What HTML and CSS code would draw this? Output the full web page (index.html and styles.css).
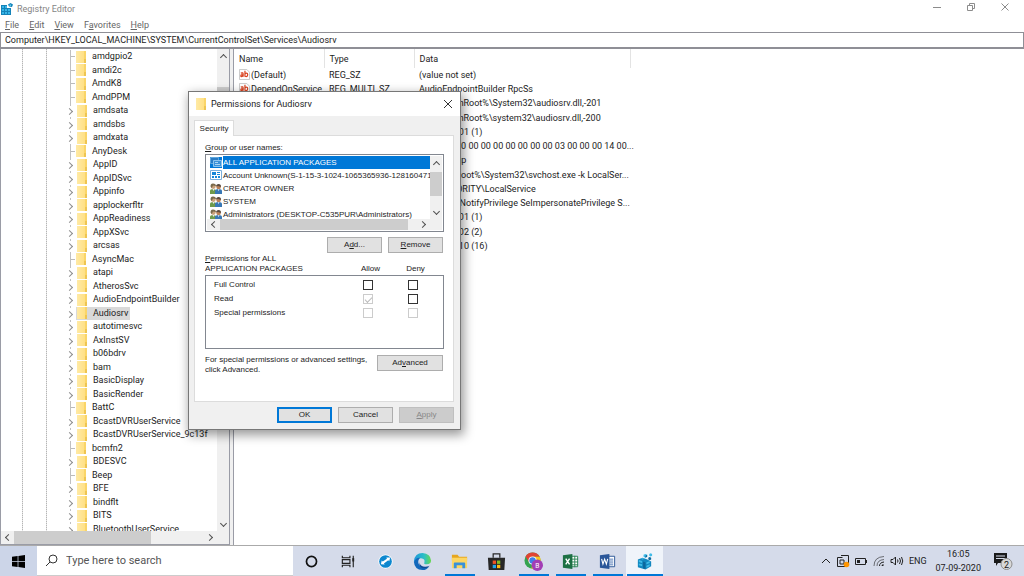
FILE: index.html
```html
<!DOCTYPE html>
<html lang="en">
<head>
<meta charset="utf-8">
<title>Registry Editor</title>
<link rel="stylesheet" href="styles.css">
</head>
<body>
<svg class="sprite" aria-hidden="true">
  <symbol id="i-reg" viewBox="0 0 12 12">
    <path fill="#1583b8" d="M0 2h6v3h4v7H0z"/>
    <path fill="#38b6e8" d="M1 3h2v2H1zM4 3h2v2H4zM1 6h2v2H1zM4 6h2v2H4zM7 6h2v2H7zM1 9h2v2H1zM4 9h2v2H4zM7 9h2v2H7z"/>
    <path fill="#1583b8" d="M9.500 0 12 1.500 11 4 8 3.500 7 1.500z"/>
    <path fill="#58caf2" d="M8.500 1.500h1.500V3H8.500z"/>
  </symbol>
  <symbol id="i-string" viewBox="0 0 12 12">
    <path fill="#fff" stroke="#c4c4c4" d="M.5.5h8l3 3v8H.5z"/>
    <path fill="none" stroke="#d9411e" stroke-width="1.300" d="M2 4.500q2.500-1 2.500 1v3M4.500 6.200Q2 6 2 7.500t2.500 0M6.500 2v6.500M6.500 6q0-1.500 1.500-1.500T9.500 6.400 8 8.300 6.500 7"/>
  </symbol>
  <symbol id="i-users" viewBox="0 0 12 11">
    <path fill="#6f9a4b" d="M0 11V8q0-2 3-2t3 2v3z"/>
    <path fill="#3978b5" d="M5 11V8q0-2 3.500-2T12 8v3z"/>
    <circle cx="3.300" cy="3.500" r="2.400" fill="#caa27a"/>
    <path fill="#7a6a4c" d="M.7 4Q0 .5 3 .5q3 0 3 2.500L3 2.500 1.800 5z"/>
    <circle cx="8.600" cy="4" r="2.300" fill="#b98057"/>
    <path fill="#5a4a3e" d="M6 3.500Q6 1 8.600 1T11 4L8 3z"/>
    <path fill="#e7edf1" d="m2.500 6 1 2 1-2zM7.800 6.300l.8 2 .8-2z"/>
  </symbol>
  <symbol id="i-packages" viewBox="0 0 12 11">
    <path fill="#2b7cc4" stroke="#5fa8de" d="M.5.5h8v6h-8z"/>
    <path fill="#3c92d8" stroke="#8cc4ee" d="M3.500 3.500h8v6h-8z"/>
    <path fill="#a9d5f3" d="M5 5h3v1H5zM5 7h5v1H5z"/>
  </symbol>
  <symbol id="i-account" viewBox="0 0 12 11">
    <path fill="#fff" stroke="#7aaedb" d="M.5.5h11v9H.5z"/>
    <path fill="#1686d9" d="M2 2h4v3H2zM7 2h3v1H7zM7 4h3v1H7zM2 6h2v2H2zM5 6h2v2H5zM8 6h2v2H8z"/>
  </symbol>
</svg>

<div class="desktop">
  <main class="window">
    <header class="titlebar">
      <svg class="app-icon"><use href="#i-reg"/></svg>
      <h1>Registry Editor</h1>
      <div class="controls">
        <button aria-label="Minimize"><svg viewBox="0 0 10 10"><path d="M1 5.500h8"/></svg></button>
        <button aria-label="Restore"><svg viewBox="0 0 10 10"><path d="M1.500 3.500h5v5h-5zM3.500 3.500v-2h5v5h-2"/></svg></button>
        <button aria-label="Close"><svg viewBox="0 0 10 10"><path d="m1.500 1.500 7 7M8.500 1.500l-7 7"/></svg></button>
      </div>
    </header>
    <nav class="menubar">
      <button><u>F</u>ile</button>
      <button><u>E</u>dit</button>
      <button><u>V</u>iew</button>
      <button>F<u>a</u>vorites</button>
      <button><u>H</u>elp</button>
    </nav>
    <input class="address" type="text" aria-label="Address" value="Computer\HKEY_LOCAL_MACHINE\SYSTEM\CurrentControlSet\Services\Audiosrv">

    <div class="panes">
      <section class="tree-pane">
        <div class="tree-row">
          <ul class="tree">
            <li class="leaf"><span>amdgpio2</span></li>
            <li class="leaf"><span>amdi2c</span></li>
            <li class="leaf"><span>AmdK8</span></li>
            <li class="leaf"><span>AmdPPM</span></li>
            <li><span>amdsata</span></li>
            <li><span>amdsbs</span></li>
            <li><span>amdxata</span></li>
            <li class="leaf"><span>AnyDesk</span></li>
            <li><span>AppID</span></li>
            <li><span>AppIDSvc</span></li>
            <li><span>Appinfo</span></li>
            <li><span>applockerfltr</span></li>
            <li><span>AppReadiness</span></li>
            <li><span>AppXSvc</span></li>
            <li><span>arcsas</span></li>
            <li class="leaf"><span>AsyncMac</span></li>
            <li><span>atapi</span></li>
            <li><span>AtherosSvc</span></li>
            <li><span>AudioEndpointBuilder</span></li>
            <li class="selected"><span>Audiosrv</span></li>
            <li><span>autotimesvc</span></li>
            <li><span>AxInstSV</span></li>
            <li><span>b06bdrv</span></li>
            <li><span>bam</span></li>
            <li><span>BasicDisplay</span></li>
            <li><span>BasicRender</span></li>
            <li class="leaf"><span>BattC</span></li>
            <li><span>BcastDVRUserService</span></li>
            <li><span>BcastDVRUserService_9c13f</span></li>
            <li class="leaf"><span>bcmfn2</span></li>
            <li><span>BDESVC</span></li>
            <li class="leaf"><span>Beep</span></li>
            <li><span>BFE</span></li>
            <li><span>bindflt</span></li>
            <li><span>BITS</span></li>
            <li><span>BluetoothUserService</span></li>
          </ul>
          <div class="scroll vertical tree-v"><i class="arrow up"></i><b></b><i class="arrow down"></i></div>
        </div>
        <div class="scroll horizontal tree-h"><i class="arrow left"></i><b></b><i class="arrow right"></i></div>
      </section>

      <section class="value-pane">
        <table class="values">
          <thead><tr><th class="c-name">Name</th><th class="c-type">Type</th><th class="c-data">Data</th><th class="c-rest"></th></tr></thead>
          <tbody>
            <tr><td><svg><use href="#i-string"/></svg>(Default)</td><td>REG_SZ</td><td>(value not set)</td></tr>
            <tr><td><svg><use href="#i-string"/></svg>DependOnService</td><td>REG_MULTI_SZ</td><td>AudioEndpointBuilder RpcSs</td></tr>
            <tr><td><svg><use href="#i-string"/></svg>Description</td><td>REG_SZ</td><td>@%SystemRoot%\System32\audiosrv.dll,-201</td></tr>
            <tr><td><svg><use href="#i-string"/></svg>DisplayName</td><td>REG_SZ</td><td>@%SystemRoot%\system32\audiosrv.dll,-200</td></tr>
            <tr><td><svg><use href="#i-string"/></svg>ErrorControl</td><td>REG_DWORD</td><td>0x00000001 (1)</td></tr>
            <tr><td><svg><use href="#i-string"/></svg>FailureActions</td><td>REG_BINARY</td><td>80 51 01 00 00 00 00 00 00 00 00 03 00 00 00 14 00...</td></tr>
            <tr><td><svg><use href="#i-string"/></svg>Group</td><td>REG_SZ</td><td>AudioGroup</td></tr>
            <tr><td><svg><use href="#i-string"/></svg>ImagePath</td><td>REG_EXPAND_SZ</td><td>%SystemRoot%\System32\svchost.exe -k LocalSer...</td></tr>
            <tr><td><svg><use href="#i-string"/></svg>ObjectName</td><td>REG_SZ</td><td>NT AUTHORITY\LocalService</td></tr>
            <tr><td><svg><use href="#i-string"/></svg>RequiredPrivileges</td><td>REG_MULTI_SZ</td><td>SeChangeNotifyPrivilege SeImpersonatePrivilege S...</td></tr>
            <tr><td><svg><use href="#i-string"/></svg>ServiceSidType</td><td>REG_DWORD</td><td>0x00000001 (1)</td></tr>
            <tr><td><svg><use href="#i-string"/></svg>Start</td><td>REG_DWORD</td><td>0x00000002 (2)</td></tr>
            <tr><td><svg><use href="#i-string"/></svg>Type</td><td>REG_DWORD</td><td>0x00000010 (16)</td></tr>
          </tbody>
        </table>
      </section>
    </div>
  </main>

  <section class="dialog" role="dialog" aria-labelledby="dlg-title">
    <header class="dialog-title">
      <i class="folder"></i>
      <h2 id="dlg-title">Permissions for Audiosrv</h2>
      <button aria-label="Close dialog"><svg viewBox="0 0 10 10"><path d="m1 1 8 8M9 1 1 9"/></svg></button>
    </header>
    <div class="dialog-body">
      <button class="tab" role="tab" aria-selected="true">Security</button>
      <div class="sheet">
        <p id="grp"><u>G</u>roup or user names:</p>
        <div class="listbox">
          <div class="list-row">
            <ul class="users" role="listbox" aria-labelledby="grp">
              <li class="picked" role="option"><svg><use href="#i-packages"/></svg><span>ALL APPLICATION PACKAGES</span></li>
              <li role="option"><svg><use href="#i-account"/></svg><span>Account Unknown(S-1-15-3-1024-1065365936-128160471</span></li>
              <li role="option"><svg><use href="#i-users"/></svg><span>CREATOR OWNER</span></li>
              <li role="option"><svg><use href="#i-users"/></svg><span>SYSTEM</span></li>
              <li role="option"><svg><use href="#i-users"/></svg><span>Administrators (DESKTOP-C535PUR\Administrators)</span></li>
            </ul>
            <div class="scroll vertical list-v"><i class="arrow up"></i><b></b><i class="arrow down"></i></div>
          </div>
          <div class="scroll horizontal list-h"><i class="arrow left"></i><b></b><i class="arrow right"></i></div>
        </div>
        <div class="actions list-actions">
          <button class="btn">A<u>d</u>d...</button>
          <button class="btn"><u>R</u>emove</button>
        </div>
        <div class="perm-head">
          <p><u>P</u>ermissions for ALL<br>APPLICATION PACKAGES</p>
          <span id="allow">Allow</span>
          <span id="deny">Deny</span>
        </div>
        <div class="perm-box">
          <table>
            <tr><th id="full">Full Control</th><td><input type="checkbox" aria-labelledby="full allow"></td><td><input type="checkbox" aria-labelledby="full deny"></td></tr>
            <tr><th id="read">Read</th><td><input type="checkbox" checked disabled aria-labelledby="read allow"></td><td><input type="checkbox" aria-labelledby="read deny"></td></tr>
            <tr><th id="special">Special permissions</th><td><input type="checkbox" disabled aria-labelledby="special allow"></td><td><input type="checkbox" disabled aria-labelledby="special deny"></td></tr>
          </table>
        </div>
        <div class="advanced">
          <p>For special permissions or advanced settings,<br>click Advanced.</p>
          <button class="btn wide">Ad<u>v</u>anced</button>
        </div>
      </div>
      <div class="actions footer">
        <button class="btn default">OK</button>
        <button class="btn">Cancel</button>
        <button class="btn" disabled><u>A</u>pply</button>
      </div>
    </div>
  </section>

  <footer class="taskbar">
    <button class="start" aria-label="Start"><svg viewBox="0 0 12 12"><path d="M0 1.700 5.200 1v4.600H0zM5.900.9 12 0v5.600H5.900zM0 6.300h5.200V11L0 10.300zM5.900 6.300H12V12l-6.100-.9z"/></svg></button>
    <label class="search">
      <svg viewBox="0 0 13 13"><circle cx="8" cy="5" r="4"/><path d="M5 8 1 12"/></svg>
      <input type="text" aria-label="Search" placeholder="Type here to search">
    </label>
    <div class="apps">
      <button aria-label="Cortana"><svg viewBox="0 0 20 20"><circle cx="10" cy="10" r="5.300" fill="none" stroke="#111" stroke-width="1.800"/></svg></button>
      <button aria-label="Task view"><svg viewBox="0 0 20 20"><path fill="none" stroke="#222" stroke-width="1.200" d="M3.500 4v2h8V4M3.500 16v-2h8v2M3.500 8h8v4h-8zM15 4v12"/><path fill="#222" d="M14 6.500h2V10h-2z"/></svg></button>
      <button aria-label="Remote support"><svg viewBox="0 0 20 20"><circle cx="10" cy="10" r="7.500" fill="#fff"/><circle cx="10" cy="10" r="6.700" fill="#0c87cf"/><path fill="#fff" d="m5.200 13 .8-4 1.100 1.100L11.500 7l-.6-1.300 4 .1-1 3.900-1-1L8.300 12l.9 1.200z"/></svg></button>
      <button aria-label="Edge"><svg viewBox="0 0 20 20">
        <defs><linearGradient id="eg" x1="0" y1="0" x2="1" y2="0"><stop offset="0" stop-color="#1d95dc"/><stop offset=".6" stop-color="#2dc0c4"/><stop offset="1" stop-color="#69d84f"/></linearGradient></defs>
        <path fill="url(#eg)" d="M1 9.500Q2 1 10 1q8.500.5 9 8 0 4-4.500 4-3.500 0-2.500-2 1-4-3.500-4.500Q3.500 6.500 1 11z"/>
        <path fill="#1268bb" d="M1 10.500Q3 5.500 7.500 6 4.500 9 6 12.500q2.500 4.500 9 3.500l2-.8Q14.500 19 10 19q-8.500-.5-9-8.500z"/>
        <path fill="#0d4a94" d="M7.500 9q-1.500 3 1 5.200 3.500 2.600 9 .3-3 3.500-7.500 2.500Q5 15 7.500 9z"/></svg></button>
      <button class="running" aria-label="File Explorer"><svg viewBox="0 0 20 20"><path fill="#e6a620" d="M2 3h6l1.500 2H18v4H2z"/><path fill="#fdd663" d="M2 6h16v11H2z"/><path fill="#3a91d9" d="M4 17v-5q0-1 1-1h10q1 0 1 1v5h-3v-3H7v3z"/></svg></button>
      <button aria-label="Store"><svg viewBox="0 0 20 20"><path fill="none" stroke="#2a2a2a" stroke-width="1.300" d="M6.500 6V2h7v4"/><path fill="#272727" d="M1 6h18l-.8 13H1.800z"/><path fill="#ef5326" d="M6 9h3.500v3.500H6z"/><path fill="#80bb26" d="M10.500 9H14v3.500h-3.500z"/><path fill="#20a4e8" d="M6 13.500h3.500V17H6z"/><path fill="#fdb913" d="M10.500 13.500H14V17h-3.500z"/></svg></button>
      <button class="running" aria-label="Chrome"><svg viewBox="0 0 20 20"><circle cx="9" cy="9" r="8.500" fill="#33a350"/><path fill="#e14334" d="M1.600 4.800Q4 .5 9 .5q5.300 0 7.600 4.500H9L5.500 11z"/><path fill="#f9c61d" d="M9 5h7.600q2.500 5-1.100 9.500-3 3.300-7.500 3z"/><circle cx="9" cy="9" r="4.300" fill="#fff"/><circle cx="9" cy="9" r="3.400" fill="#3f7fe8"/><circle cx="14" cy="14" r="6" fill="#a23db5"/><text x="14" y="16.500" font-size="7" text-anchor="middle" fill="#fff">B</text></svg></button>
      <button class="running" aria-label="Excel"><svg viewBox="0 0 20 20"><path fill="#fff" stroke="#2c8455" d="M10 4.500h7.500v11H10z"/><path stroke="#2c8455" d="M10 7.500h8M10 10.500h8M10 13.500h8M14.500 4v12"/><path fill="#1d7044" d="M2 3.500 12 2v16L2 16.500z"/><path stroke="#fff" stroke-width="1.500" d="m5 7 4 6M9 7l-4 6"/></svg></button>
      <button class="running" aria-label="Word"><svg viewBox="0 0 20 20"><path fill="#fff" stroke="#2b5797" d="M10 4.500h7.500v11H10z"/><path stroke="#4f78b5" d="M12 7.500h4M12 9.500h4M12 11.500h4M12 13.500h4"/><path fill="#2a5699" d="M2 3.500 12 2v16L2 16.500z"/><path fill="none" stroke="#fff" stroke-width="1.200" d="m3.800 7.300 1.400 5.400L7 7.500l1.800 5.200 1.400-5.400"/></svg></button>
      <button class="running active" aria-label="Registry Editor"><svg viewBox="0 0 20 20"><path fill="#1287bf" d="m3 8 5-2 5 2 4 2v5l-6 3.500L3 16z"/><path fill="#41bce8" d="m4 8.500 3.500 1v2L4 10.500zM4 12l3.500 1v2L4 14zM12 11l3.500-1.500v2L12 13zM12 14.500l3.500-1.500v2L12 16.500zM6 7.200 8 6.500l2 .7L8 8zM9 3l2-.8 1.800.8v2L11 6 9 5zM15 2l1.500-.7L18 2v2l-1.500.8L15 4z"/><path fill="#0c679c" d="m8.500 10 2.500 1v7l-2.500-1zM11 4l1.800-1v2L11 6zM14 6l1.500-.7L17 6v2l-1.500.8L14 8z"/></svg></button>
    </div>
    <div class="tray">
      <svg class="chev" viewBox="0 0 10 12"><path d="m1 8 4-4 4 4"/></svg>
      <svg class="meet" viewBox="0 0 14 14"><path d="M1.500 3.500h5M1.500 3.500v9h9M5 1.500h7.500V9M4 6h4M4 6v4h4V6"/><circle cx="10.500" cy="10.500" r="2.800"/></svg>
      <svg class="batt" viewBox="0 0 13 12"><path d="M.5 3.500h10v6H.5zM11.500 5v3"/><path class="solid" d="M2 5h3v3H2z"/></svg>
      <svg class="wifi" viewBox="0 0 12 12"><path opacity=".6" d="M1 11Q1 2 11 1.500M4 11q0-6 7-6.500"/><path d="M6.500 11q0-3.500 4.500-4"/><path class="solid" d="M8.500 11q0-1.500 2-2v2z"/></svg>
      <svg class="sound" viewBox="0 0 14 12"><path d="M1 4.500h2L5.500 2v8L3 7.500H1zM7.500 4.500q1 1.500 0 3M9.500 3q2 3 0 6M11.500 2q2.500 4 0 8"/></svg>
      <span>ENG</span>
      <time>16:05<br>07-09-2020</time>
      <button aria-label="Notifications"><svg viewBox="0 0 22 20"><path d="M2 2h13v10H6l-2 3v-3H2z"/><path stroke="#d5dbea" d="M4 5h9M4 7.500h9"/><circle cx="14.500" cy="13" r="5.500" fill="#d8d8d8" stroke="#8e8e8e"/><text x="14.500" y="16.500" font-size="9" text-anchor="middle">2</text></svg></button>
    </div>
  </footer>
</div>
</body>
</html>
```
FILE: styles.css
```css
* { box-sizing: border-box; }
body, h1, h2, p, ul { margin: 0; padding: 0; }
body { font: 9px/14px Roboto, "Open Sans", sans-serif; color: #1c1c1c; background: #fff; }
ul { list-style: none; }
button, input { font: inherit; color: inherit; border: 0; padding: 0; background: none; }
h1, h2, th { font-weight: 400; font-size: inherit; text-align: left; }
.sprite { position: absolute; width: 0; height: 0; }

.desktop { position: relative; height: 100vh; display: flex; flex-direction: column; overflow: hidden; }
.window { flex: 1; min-height: 0; display: flex; flex-direction: column; }

.titlebar { display: flex; align-items: center; height: 18px; gap: 4px; padding-left: 1px; color: #858585; }
.app-icon { width: 12px; height: 12px; }
.controls { margin-left: auto; display: flex; padding-right: 2px; }
.controls button { width: 34px; height: 16px; }
.controls svg { width: 10px; height: 10px; fill: none; stroke: #8c8c8c; }
.menubar { display: flex; gap: 10px; height: 14px; padding-left: 5px; color: #666; }
.menubar button { line-height: 14px; }
u { text-underline-offset: 1px; }
.address { height: 17px; border: 1px solid #8f8f96; border-bottom-width: 2px; padding: 0 4px; width: 100%; }

.panes { flex: 1; min-height: 0; display: flex; gap: 3px; background: #f0f0f0; }
.tree-pane { width: 230px; background: #fff; border: 1px solid #9a9ca6; border-top: 0; display: flex; flex-direction: column; }
.tree-row { flex: 1; min-height: 0; display: flex; }
.tree { flex: 1; overflow: hidden; padding-top: 1px; background-image: repeating-linear-gradient(#b5b5b5 0 1px, #e4e4e4 1px 2px), repeating-linear-gradient(#b5b5b5 0 1px, #e4e4e4 1px 2px); background-size: 1px 100%; background-position: 21px 0, 45px 0; background-repeat: no-repeat; }
.tree li { display: flex; align-items: center; height: 13px; padding-left: 68px; line-height: 13px; white-space: nowrap; background: linear-gradient(#c0c0c0, #c0c0c0) 69px 0 / 1px 2px no-repeat; }
.tree li:nth-child(even) { height: 14px; }
.tree li.leaf { background-size: 1px 100%; }
.tree li::before { content: ""; width: 4px; height: 4px; border: solid #8d8d8d; border-width: 1px 1px 0 0; transform: rotate(45deg); margin: 2px 4px 0 -2px; }
.tree li.leaf::before { width: 4px; height: 1px; border: 0; background: #bbb; transform: none; margin: 0 0 0 2px; }
.tree span { display: flex; align-items: center; gap: 6px; height: 13px; padding: 0 2px 0 1px; }
.tree span::before, .folder { content: ""; width: 10px; height: 12px; background: linear-gradient(#eec552, #eec552) right bottom / 2px 4px no-repeat, linear-gradient(90deg, #ffeaa5, #ffe085 80%, #fad568 80%); }
.tree .selected span { background: #d9d9d9; }

.scroll { display: flex; background: #f0f0f0; align-items: center; }
.scroll b { background: #cdcdcd; }
.vertical { flex-direction: column; width: 12px; }
.horizontal { height: 13px; }
.horizontal b { align-self: stretch; }
.vertical b { align-self: stretch; }
.arrow { width: 5px; height: 5px; border: solid #505050; border-width: 1px 1px 0 0; }
.up { transform: rotate(-45deg); margin: 6px 0 5px; }
.down { transform: rotate(135deg); margin: auto 0 5px; }
.left { transform: rotate(-135deg); margin: 0 3px 0 5px; }
.right { transform: rotate(45deg); margin: 0 6px 0 auto; }
.tree-v b { height: 60px; margin-top: 22px; }
.tree-h b { width: 60%; }
.tree-h .right { margin-right: 17px; }

.value-pane { flex: 1; min-width: 0; background: #fff; border-left: 1px solid #9a9ca6; overflow: hidden; }
.values { width: 100%; table-layout: fixed; border-collapse: collapse; white-space: nowrap; }
.values th { height: 19px; padding: 0 0 0 5px; border-right: 1px solid #e3e3e3; }
.values .c-rest { border: 0; }
.c-name, .c-type { width: 90px; }
.c-data { width: 216px; }
.values td { height: 14px; line-height: 14px; padding: 0 0 0 5px; }
.values tr:nth-child(4n) td { height: 15px; }
.values svg { width: 11px; height: 11px; margin-right: 1px; vertical-align: -2px; }

.dialog { position: absolute; left: 188px; top: 91px; width: 273px; border: 1px solid #777; background: #f0f0f0; box-shadow: 2px 4px 10px 1px rgba(0, 0, 0, .4); font: 8px/10px "Liberation Sans", Arial, sans-serif; }
.dialog-title { display: flex; align-items: center; gap: 5px; height: 24px; padding: 0 7px; background: #fff; font: 9px/14px Roboto, "Open Sans", sans-serif; }
.dialog-title button { margin-left: auto; display: flex; }
.dialog-title svg { width: 10px; height: 10px; fill: none; stroke: #333; }
.dialog-body { padding: 4px 6px 6px 5px; }
.tab { display: block; height: 16px; width: 40px; background: #fff; border: 1px solid #dcdcdc; border-bottom: 0; margin-bottom: -1px; position: relative; }
.sheet { background: #fff; border: 1px solid #dcdcdc; padding: 7px 9px 26px 10px; }
.listbox { margin-top: 1px; border: 1px solid #828790; padding: 1px; }
.list-row { display: flex; height: 63px; }
.users { flex: 1; min-width: 0; overflow: hidden; padding-left: 3px; }
.users li { display: flex; align-items: center; height: 13px; white-space: nowrap; }
.users svg { width: 12px; height: 11px; flex: none; margin-right: 1px; }
.users span { flex: 1; line-height: 13px; }
.picked span { background: #0078d7; color: #fff; }
.picked svg { background: #0078d7; }
.list-v b { height: 24px; }
.list-h { height: 11px; }
.list-h b { width: 188px; }
.list-h .right { margin-right: 17px; }
.actions { display: flex; justify-content: flex-end; gap: 6px; }
.list-actions { margin-top: 5px; padding-right: 1px; }
.btn { width: 55px; height: 16px; background: #e1e1e1; border: 1px solid #adadad; }
.btn.wide { width: 66px; }
.btn.default { border: 2px solid #0078d7; }
.btn:disabled { background: #ccc; border-color: #bfbfbf; color: #888; }
.perm-head { display: grid; grid-template-columns: 1fr 45px 45px; align-items: end; padding-right: 6px; margin-top: 1px; }
.perm-head span { text-align: center; }
.perm-box { margin-top: 1px; border: 1px solid #828790; min-height: 74px; padding: 2px 8px; }
.perm-box table { width: 100%; border-collapse: collapse; table-layout: fixed; }
.perm-box th { padding: 0; }
.perm-box td { width: 45px; height: 14px; padding: 0; text-align: center; }
input[type="checkbox"] { appearance: none; display: block; width: 10px; height: 10px; margin: 0 auto; border: 1px solid #333; background: #fff; }
input[type="checkbox"]:disabled { border-color: #ccc; }
input[type="checkbox"]:checked::after { content: ""; display: block; width: 6px; height: 3px; margin: 2px 1px; border: solid #bbb; border-width: 0 0 1px 1px; transform: rotate(-45deg); }
.advanced { display: flex; justify-content: space-between; margin-top: 6px; padding-right: 1px; white-space: nowrap; }
.footer { margin-top: 5px; }

.taskbar { display: flex; height: 31px; background: #d5dbea; border-top: 1px solid #aaa; }
.start { width: 37px; background: #ccd5e8; }
.start svg { width: 13px; height: 13px; display: block; margin: 0 auto; }
.search { width: 256px; display: flex; align-items: center; gap: 8px; padding-left: 8px; background: #fff; border-bottom: 1px solid #ccc; font-size: 11px; }
.search svg { width: 13px; height: 13px; fill: none; stroke: #333; }
.search input { flex: 1; min-width: 0; }
.search input::placeholder { color: #555; opacity: 1; }
.apps { display: flex; }
.apps button { width: 37px; display: flex; align-items: center; justify-content: center; padding-top: 2px; border-bottom: 2px solid transparent; }
.apps svg { width: 19px; height: 19px; }
.apps .running { background: linear-gradient(#0078d7, #0078d7) center bottom / 30px 2px no-repeat border-box; }
.apps .active { background: linear-gradient(#0078d7, #0078d7) center bottom / 36px 2px no-repeat border-box, #f0f4fa; }
.tray { margin-left: auto; display: flex; align-items: center; gap: 5px; padding-right: 10px; }
.tray svg { fill: none; stroke: #222; height: 12px; }
.chev { width: 10px; }
.tray .meet { width: 14px; height: 14px; }
.meet circle { fill: #ff9500; stroke: none; }
.batt { width: 13px; }
.wifi { width: 12px; }
.sound { width: 14px; }
.tray .solid { fill: #222; stroke: none; }
.tray time { text-align: center; line-height: 14px; margin: 0 6px 0 4px; }
.tray button svg { width: 22px; height: 20px; display: block; fill: #1a1a1a; stroke: none; }
```
